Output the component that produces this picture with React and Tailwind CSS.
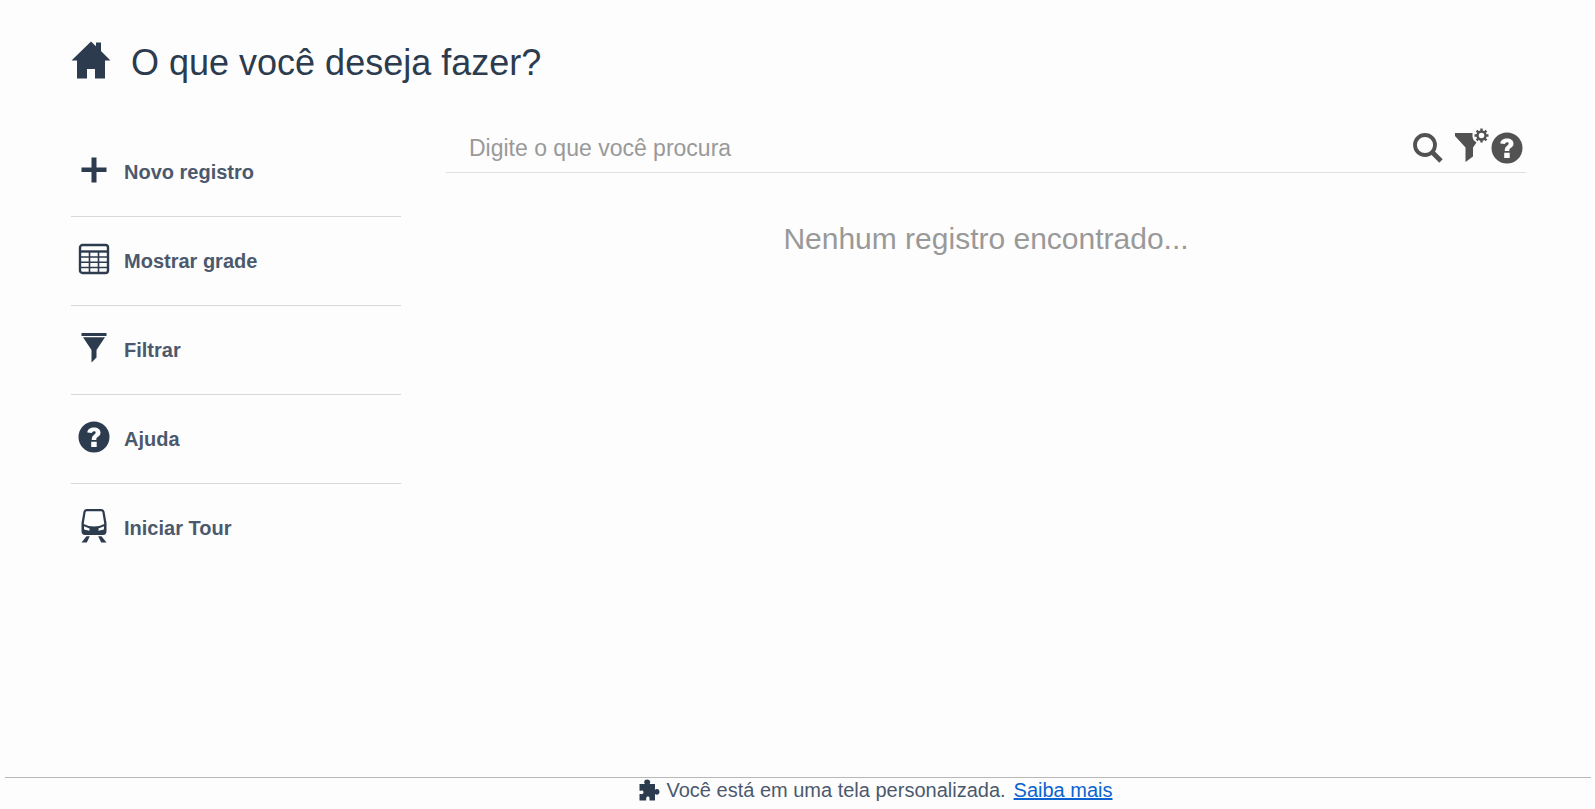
function HomeIcon() {
  return (
    <svg width="40" height="38" viewBox="0 0 40 38" fill="currentColor" aria-hidden="true">
      <path d="M20 0.5 25 5.2V1.5H30V10L39.5 19.5H34V37.5H24V28H16V37.5H6V19.5H0.5Z" />
    </svg>
  );
}

function PlusIcon() {
  return (
    <svg width="26" height="26" viewBox="0 0 26 26" fill="currentColor" aria-hidden="true">
      <path d="M10.5 0.5H15.5V10.5H25.5V15H15.5V25.5H10.5V15H0.5V10.5H10.5Z" />
    </svg>
  );
}

function GridIcon() {
  return (
    <svg width="32" height="32" viewBox="0 0 32 32" fill="none" stroke="currentColor" aria-hidden="true">
      <rect x="2" y="2" width="28" height="28" rx="2.5" strokeWidth="2.4" />
      <path d="M2 8.5H30" strokeWidth="2.4" />
      <path d="M3 14H29M3 19.3H29M3 24.5H29M11.5 9V29M20.5 9V29" strokeWidth="1.6" />
    </svg>
  );
}

function FilterIcon() {
  return (
    <svg width="26" height="30" viewBox="0 0 26 30" fill="currentColor" aria-hidden="true">
      <path d="M0.5 0H25.5V3H0.5ZM2 4.2H24L15.5 17V24.5L10.5 29.5V17Z" />
    </svg>
  );
}

function HelpIcon() {
  return (
    <svg width="32" height="32" viewBox="0 0 32 32" aria-hidden="true">
      <circle cx="16" cy="16" r="15.5" fill="currentColor" />
      <path
        d="M9.3 11.4C9.6 8.2 12.3 6.6 16 6.6C19.8 6.6 22.5 8.6 22.5 11.7C22.5 13.9 21.2 15 19.7 16.1C18.7 16.8 18.3 17.4 18.3 19H13.7C13.7 16.2 14.5 15 16.1 13.7C17.2 12.9 17.7 12.5 17.7 11.6C17.7 10.7 17.1 10.2 16 10.2C14.8 10.2 14.2 10.9 14 12.1ZM13.2 20.7H18.7V26H13.2Z"
        fill="#fdfdfd"
      />
    </svg>
  );
}

function TrainIcon() {
  return (
    <svg width="26" height="34" viewBox="0 0 26 34" fill="currentColor" aria-hidden="true">
      <path
        fillRule="evenodd"
        d="M5.5 0H20.5Q23 0 23.5 2.5L25.5 14V22Q25.5 26 22 26H4Q0.5 26 0.5 22V14L2.5 2.5Q3 0 5.5 0ZM5.8 2.2Q4.8 2.2 4.6 3.3L2.7 15Q7.5 17.6 13 17.6Q18.5 17.6 23.3 15L21.4 3.3Q21.2 2.2 20.2 2.2ZM3 17.3V19.5Q3 20.5 3.8 20.7L8.5 21.7V19.6ZM23 17.3V19.5Q23 20.5 22.2 20.7L17.5 21.7V19.6Z"
      />
      <path d="M5.5 27.3H8.8L5.8 33.5H0.5ZM20.5 27.3H17.2L20.2 33.5H25.5Z" />
    </svg>
  );
}

function SearchIcon() {
  return (
    <svg width="30" height="30" viewBox="0 0 30 30" fill="none" stroke="currentColor" aria-hidden="true">
      <circle cx="12" cy="12" r="10" strokeWidth="3.8" />
      <path d="M19 19 28 28" strokeWidth="4.8" />
    </svg>
  );
}

function FilterGearIcon() {
  return (
    <svg width="34" height="35" viewBox="0 0 34 35" fill="currentColor" aria-hidden="true">
      <path d="M0 5H17.5Q17 8.5 18.5 12L21.5 14.5L18 19.5V28.5L10.5 34V19.5L0 8Z" />
      <circle cx="26.5" cy="7.5" r="4" fill="none" stroke="currentColor" strokeWidth="2.4" />
      <path
        d="M26.5 0.5V3M26.5 12V14.5M19.5 7.5H22M31 7.5H33.5M21.6 2.6 23.3 4.3M29.7 10.7 31.4 12.4M31.4 2.6 29.7 4.3M23.3 10.7 21.6 12.4"
        stroke="currentColor"
        strokeWidth="2.4"
      />
    </svg>
  );
}

function PuzzleIcon() {
  return (
    <svg width="21" height="22" viewBox="0 0 21 22" fill="currentColor" aria-hidden="true">
      <path d="M0.5 5H5.8C5.4 4.3 5.2 3.7 5.2 3C5.2 1.3 6.5 0.5 8.2 0.5C10 0.5 11.2 1.5 11.2 3C11.2 3.7 11 4.3 10.6 5H16V10.8C16.6 10.3 17.2 10 18 10C19.5 10 20.5 11.2 20.5 12.8C20.5 14.5 19.5 15.7 18 15.7C17.2 15.7 16.6 15.4 16 14.9V21.5H10.5V19.5C10.5 18 10 17.5 9 17.5C8 17.5 7.2 18 7.2 19.5V21.5H0.5V15H2C3 15.4 4.5 15 4.5 13.3C4.5 11.7 3 11.3 2 11.8H0.5Z" />
    </svg>
  );
}

const actions = [
  { label: 'Novo registro', icon: PlusIcon },
  { label: 'Mostrar grade', icon: GridIcon },
  { label: 'Filtrar', icon: FilterIcon },
  { label: 'Ajuda', icon: HelpIcon },
  { label: 'Iniciar Tour', icon: TrainIcon },
];

export default function App() {
  return (
    <div className="flex min-h-screen flex-col bg-[#fdfdfd] font-['Liberation_Sans',Arial,sans-serif] text-[#2c3b4e]">
      <header className="flex items-start gap-5 px-[71px] pt-[41px]">
        <HomeIcon />
        <h1 className="text-[36px] leading-11">O que você deseja fazer?</h1>
      </header>

      <div className="flex flex-1 items-start gap-[45px] pt-[43px] pr-[69px] pl-[71px]">
        <nav className="w-[330px] shrink-0 divide-y divide-[#d8d8d8]">
          {actions.map(({ label, icon: Icon }) => (
            <button key={label} type="button" className="flex h-[89px] w-full items-center gap-3.5 px-[7px] pb-px text-left">
              <span className="flex h-9 w-8 shrink-0 items-start justify-center">
                <span className="flex h-8 items-center">
                  <Icon />
                </span>
              </span>
              <span className="text-[20px] font-bold text-[#4c596d]">{label}</span>
            </button>
          ))}
        </nav>

        <main className="min-w-0 flex-1">
          <form
            role="search"
            className="flex h-[45px] items-center border-b border-[#e0e0e0] pr-[3px] pb-1 pl-[23px] text-[#525252]"
          >
            <input
              type="text"
              aria-label="Digite o que você procura"
              placeholder="Digite o que você procura"
              className="min-w-0 flex-1 bg-transparent text-[23px] outline-none placeholder:text-[#999]"
            />
            <button type="submit" aria-label="Pesquisar" className="mr-3">
              <SearchIcon />
            </button>
            <button type="button" aria-label="Configurar filtro" className="mr-0.5 pb-1.5">
              <FilterGearIcon />
            </button>
            <button type="button" aria-label="Ajuda da pesquisa">
              <HelpIcon />
            </button>
          </form>
          <p className="mt-11 text-center text-[30px] leading-11 text-[#999]">Nenhum registro encontrado...</p>
        </main>
      </div>

      <footer className="mr-1 ml-[5px] flex h-8 items-start justify-center border-t border-[#b8b8b8] pt-px pl-[156px] text-[20px] leading-[22px]">
        <PuzzleIcon />
        <span className="ml-1.5 text-[#4c596d]">Você está em uma tela personalizada.</span>
        <a href="#" className="ml-2 text-[#0b62d0] underline">
          Saiba mais
        </a>
      </footer>
    </div>
  );
}
